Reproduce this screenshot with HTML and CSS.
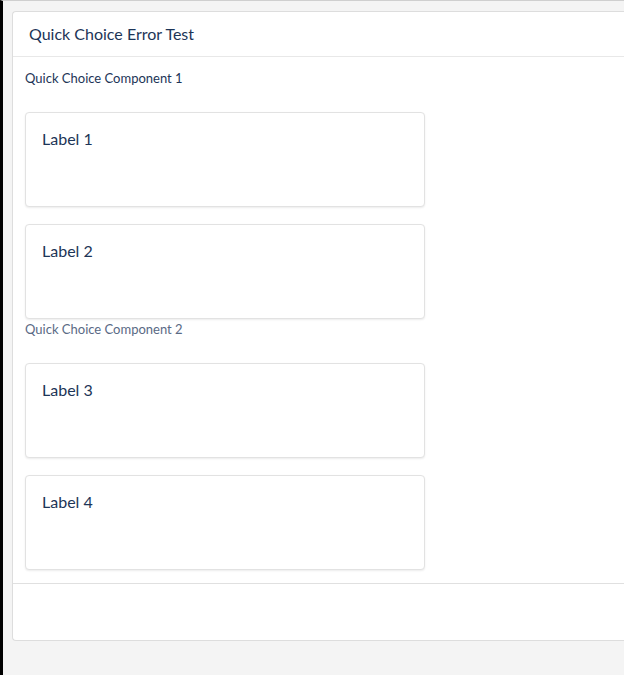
FILE: index.html
```html
<!DOCTYPE html>
<html>
<head>
<meta charset="utf-8">
<link rel="stylesheet" href="styles.css">
</head>
<body>
<div class="page">
  <div class="panel">
    <div class="panel-header">Quick Choice Error Test</div>
    <div class="panel-body">
      <div class="component">
        <div class="component-label c1">Quick Choice Component 1</div>
        <div class="choices">
          <div class="choice">Label 1</div>
          <div class="choice">Label 2</div>
        </div>
      </div>
      <div class="component">
        <div class="component-label c2">Quick Choice Component 2</div>
        <div class="choices">
          <div class="choice">Label 3</div>
          <div class="choice">Label 4</div>
        </div>
      </div>
    </div>
    <div class="panel-footer"></div>
  </div>
</div>
</body>
</html>
```
FILE: styles.css
```css
html, body {
  margin: 0;
  padding: 0;
  height: 100%;
  overflow: hidden;
}
body {
  background: #f4f4f4;
  font-family: "Lato", "Open Sans", sans-serif;
  border-left: 3px solid #000;
  border-top: 1px solid #cfcfcf;
  box-sizing: border-box;
}
.page {
  padding: 10px 0 0 9px;
}
.panel {
  background: #fff;
  border: 1px solid #dddddd;
  border-right: 0;
  border-radius: 4px 0 0 4px;
}
.panel-header {
  height: 45px;
  box-sizing: border-box;
  padding: 0 16px 2px 16px;
  display: flex;
  align-items: center;
  font-size: 16px;
  color: #1d3557;
  border-bottom: 1px solid #e8e8e8;
}
.panel-body {
  padding: 11px 12px 13px 12px;
}
.component-label {
  font-size: 13px;
  line-height: 20px;
}
.c1 { color: #1d3557; }
.c2 { color: #5a6a85; }
.choices {
  display: flex;
  flex-direction: column;
  gap: 17px;
  margin-top: 24px;
}
.choice {
  width: 400px;
  height: 95px;
  box-sizing: border-box;
  border: 1px solid #e2e2e2;
  border-radius: 4px;
  box-shadow: 0 1px 2px rgba(0,0,0,0.08);
  padding: 15px 16px;
  font-size: 16px;
  line-height: 22px;
  color: #1d3557;
  background: #fff;
}
.panel-footer {
  height: 56px;
  border-top: 1px solid #e0e0e0;
}
```
